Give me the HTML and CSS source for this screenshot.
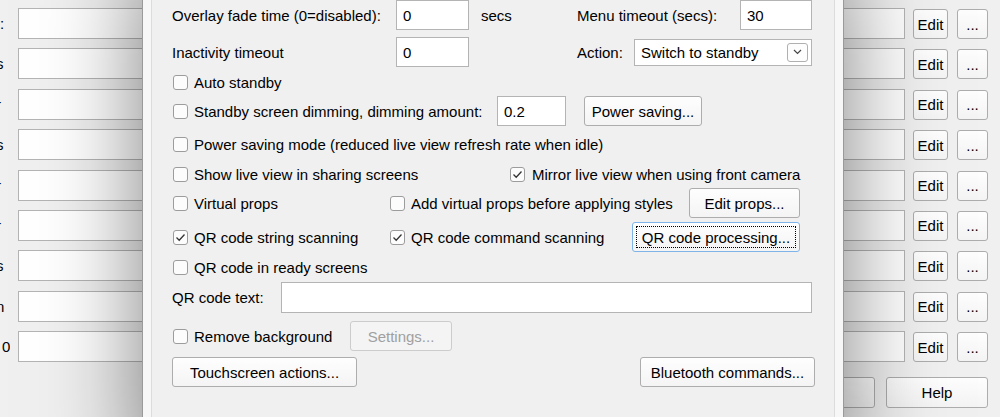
FILE: index.html
```html
<!DOCTYPE html>
<html>
<head>
<meta charset="utf-8">
<link rel="stylesheet" href="styles.css">
</head>
<body>
<div class="bg">
  <div class="bg-row"><div class="bg-label"><span class="frag">:</span></div><div class="bg-input"></div><div class="btn edit">Edit</div><div class="btn dots">...</div></div>
  <div class="bg-row"><div class="bg-label"><span class="frag cut">s</span></div><div class="bg-input"></div><div class="btn edit">Edit</div><div class="btn dots">...</div></div>
  <div class="bg-row"><div class="bg-label"><span class="frag cut">r</span></div><div class="bg-input"></div><div class="btn edit">Edit</div><div class="btn dots">...</div></div>
  <div class="bg-row"><div class="bg-label"><span class="frag cut">s</span></div><div class="bg-input"></div><div class="btn edit">Edit</div><div class="btn dots">...</div></div>
  <div class="bg-row"><div class="bg-label"><span class="frag cut">r</span></div><div class="bg-input"></div><div class="btn edit">Edit</div><div class="btn dots">...</div></div>
  <div class="bg-row"><div class="bg-label"><span class="frag cut">r</span></div><div class="bg-input"></div><div class="btn edit">Edit</div><div class="btn dots">...</div></div>
  <div class="bg-row"><div class="bg-label"><span class="frag cut">s</span></div><div class="bg-input"></div><div class="btn edit">Edit</div><div class="btn dots">...</div></div>
  <div class="bg-row"><div class="bg-label"><span class="frag cut">n</span></div><div class="bg-input"></div><div class="btn edit">Edit</div><div class="btn dots">...</div></div>
  <div class="bg-row"><div class="bg-label"><span class="frag zero">0</span></div><div class="bg-input"></div><div class="btn edit">Edit</div><div class="btn dots">...</div></div>
  <div class="bg-footer"><div class="btn foot">OK</div><div class="btn foot">Help</div></div>
</div>

<div class="dialog">
  <div class="content">
    <div class="row r1">
      <span class="lbl w224">Overlay fade time (0=disabled):</span>
      <div class="field w73">0</div>
      <span class="lbl secs">secs</span>
      <span class="lbl w163">Menu timeout (secs):</span>
      <div class="field w72">30</div>
    </div>
    <div class="row r2">
      <span class="lbl w224">Inactivity timeout</span>
      <div class="field w73">0</div>
      <span class="spacer108"></span>
      <span class="lbl w57">Action:</span>
      <div class="select">
        <span>Switch to standby</span>
        <span class="drop"><svg width="9" height="6" viewBox="0 0 9 6"><path d="M1 1 L4.5 4.5 L8 1" fill="none" stroke="#444" stroke-width="1.2"/></svg></span>
      </div>
    </div>
    <div class="row r3">
      <span class="cb"><span class="box"></span>Auto standby</span>
    </div>
    <div class="row r4">
      <span class="cb w325"><span class="box"></span>Standby screen dimming, dimming amount:</span>
      <div class="field w69">0.2</div>
      <div class="btn pbtn ml18 w118">Power saving...</div>
    </div>
    <div class="row r5">
      <span class="cb"><span class="box"></span>Power saving mode (reduced live view refresh rate when idle)</span>
    </div>
    <div class="row r6">
      <span class="cb w337"><span class="box"></span>Show live view in sharing screens</span>
      <span class="cb gap7"><span class="box"><svg width="13" height="13" viewBox="0 0 13 13"><path d="M2.5 6.5 L5.2 9.2 L10.5 3.5" fill="none" stroke="#333" stroke-width="1.3"/></svg></span>Mirror live view when using front camera</span>
    </div>
    <div class="row r7">
      <span class="cb w217"><span class="box"></span>Virtual props</span>
      <span class="cb w300"><span class="box"></span>Add virtual props before applying styles</span>
      <div class="btn pbtn w111">Edit props...</div>
    </div>
    <div class="row r8">
      <span class="cb w217"><span class="box"><svg width="13" height="13" viewBox="0 0 13 13"><path d="M2.5 6.5 L5.2 9.2 L10.5 3.5" fill="none" stroke="#333" stroke-width="1.3"/></svg></span>QR code string scanning</span>
      <span class="cb w243"><span class="box"><svg width="13" height="13" viewBox="0 0 13 13"><path d="M2.5 6.5 L5.2 9.2 L10.5 3.5" fill="none" stroke="#333" stroke-width="1.3"/></svg></span>QR code command scanning</span>
      <div class="btn pbtn focus w168">QR code processing...</div>
    </div>
    <div class="row r9">
      <span class="cb"><span class="box"></span>QR code in ready screens</span>
    </div>
    <div class="row r10">
      <span class="lbl w109">QR code text:</span>
      <div class="field w531"></div>
    </div>
    <div class="row r11">
      <span class="cb w178"><span class="box"></span>Remove background</span>
      <div class="btn pbtn disabled w102">Settings...</div>
    </div>
    <div class="row r12">
      <div class="btn pbtn w185">Touchscreen actions...</div>
      <div class="btn pbtn w175 ml283">Bluetooth commands...</div>
    </div>
  </div>
</div>
</body>
</html>
```

FILE: styles.css
```css
* { box-sizing: border-box; }
html, body { margin: 0; }
body {
  width: 1000px;
  height: 417px;
  overflow: hidden;
  position: relative;
  background: #f0f0f0;
  font-family: "Liberation Sans", Arial, sans-serif;
  font-size: 15px;
  color: #000;
}

/* background window */
.bg { padding-top: 8px; }
.bg-row { display: flex; align-items: flex-start; height: 40.4px; }
.bg-label {
  width: 10px; margin-right: 8px; height: 31px;
  display: flex; justify-content: flex-start; align-items: center;
  overflow: hidden; white-space: nowrap;
}
.frag { flex: none; margin-left: 0; }
.frag.cut { margin-left: -4px; }
.frag.zero { margin-left: 2px; }
.bg-input { width: 887px; height: 31px; background: #fff; border: 1px solid #b4b4b4; }

.btn {
  height: 30px;
  background: linear-gradient(#fefefe, #f4f4f4);
  border: 1px solid #adadad;
  border-radius: 3px;
  display: flex; align-items: center; justify-content: center;
  white-space: nowrap;
  flex: none;
  position: relative;
}
.edit { width: 35px; margin-left: 8px; margin-top: 1px; }
.dots { width: 31px; margin-left: 9px; margin-top: 1px; }
.bg-footer { display: flex; justify-content: flex-end; gap: 11px; padding-right: 12px; margin-top: 5px; }
.foot { width: 102px; height: 31px; }

/* dialog */
.dialog {
  position: absolute;
  left: 142px; top: -40px;
  width: 702px; height: 520px;
  border: 1px solid #9a9a9a;
  background: #f7f7f7;
  padding: 8px;
  box-shadow: 0 0 90px rgba(0, 0, 0, 0.5);
}
.content {
  height: 100%;
  background: #f0f0f0;
  border: 1px solid #dcdcdc;
  padding: 30px 0 0 20px;
  display: flex; flex-direction: column;
}
.row { display: flex; align-items: center; flex: none; white-space: nowrap; }
.r1 { height: 30px; }
.r2 { height: 30px; margin-top: 7px; }
.r3 { height: 20px; margin-top: 5px; }
.r4 { height: 30px; margin-top: 4px; }
.r5 { height: 20px; margin-top: 8px; }
.r6 { height: 20px; margin-top: 10px; }
.r7 { height: 30px; margin-top: 4px; }
.r8 { height: 30px; margin-top: 4px; }
.r9 { height: 20px; margin-top: 5px; }
.r10 { height: 31px; margin-top: 5px; }
.r11 { height: 30px; margin-top: 8px; }
.r12 { height: 30px; margin-top: 6px; }

.lbl { flex: none; }
.w224 { width: 224px; }
.w163 { width: 163px; }
.w57 { width: 57px; }
.w109 { width: 109px; }
.secs { width: 96px; margin-left: 12px; }
.spacer108 { width: 108px; flex: none; }

.field {
  height: 30px;
  background: #fff;
  border: 1px solid #b4b4b4;
  padding-left: 6px;
  display: flex; align-items: center;
  flex: none;
}
.w73 { width: 73px; }
.w72 { width: 72px; }
.w69 { width: 69px; }
.w531 { width: 531px; height: 31px; }

.select {
  width: 178px; height: 27px;
  background: #fff;
  border: 1px solid #b4b4b4;
  padding-left: 6px; padding-right: 3px;
  display: flex; align-items: center; justify-content: space-between;
  flex: none;
}
.drop {
  width: 21px; height: 19px;
  border: 1px solid #b0b0b0;
  border-radius: 3px;
  background: #fdfdfd;
  display: flex; align-items: center; justify-content: center;
}

.cb { display: flex; align-items: center; flex: none; }
.box {
  width: 15px; height: 15px;
  margin-left: 1px; margin-right: 6px;
  border: 1px solid #9c9c9c;
  border-radius: 3px;
  background: #fcfcfc;
  display: flex; align-items: center; justify-content: center;
  flex: none;
}
.gap7 .box { margin-right: 7px; }
.w325 { width: 325px; }
.w337 { width: 337px; }
.w217 { width: 217px; }
.w300 { width: 300px; }
.w243 { width: 243px; }
.w178 { width: 178px; }

.pbtn { height: 30px; }
.w118 { width: 118px; }
.w111 { width: 111px; }
.w168 { width: 168px; }
.w102 { width: 102px; }
.w185 { width: 185px; }
.w175 { width: 175px; }
.ml18 { margin-left: 18px; }
.ml283 { margin-left: 283px; }

.focus { border-color: #7eb4ea; }
.focus::after {
  content: "";
  position: absolute;
  inset: 3px;
  border: 1px dotted #000;
}
.disabled { color: #a0a0a0; border-color: #cccccc; background: #f4f4f4; }
```
